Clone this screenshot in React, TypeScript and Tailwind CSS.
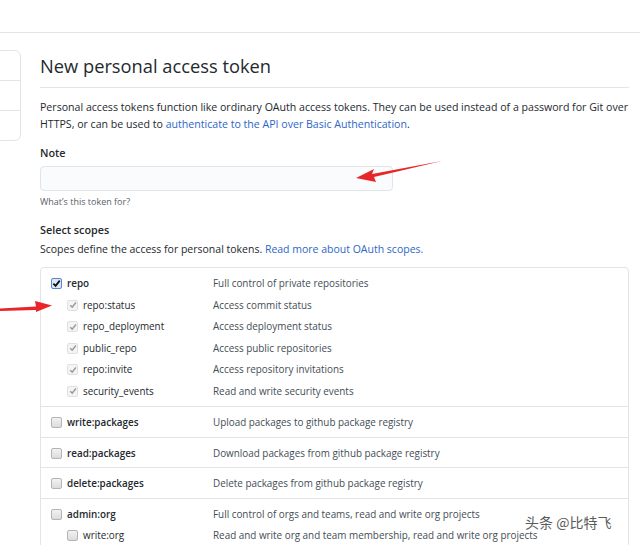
import React from 'react';

type Scope = { name: string; desc: string; sub?: boolean; checked?: boolean; bold?: boolean };

const groups: Scope[][] = [
  [
    { name: 'repo', desc: 'Full control of private repositories', checked: true, bold: true },
    { name: 'repo:status', desc: 'Access commit status', sub: true, checked: true },
    { name: 'repo_deployment', desc: 'Access deployment status', sub: true, checked: true },
    { name: 'public_repo', desc: 'Access public repositories', sub: true, checked: true },
    { name: 'repo:invite', desc: 'Access repository invitations', sub: true, checked: true },
    { name: 'security_events', desc: 'Read and write security events', sub: true, checked: true },
  ],
  [{ name: 'write:packages', desc: 'Upload packages to github package registry', bold: true }],
  [{ name: 'read:packages', desc: 'Download packages from github package registry', bold: true }],
  [{ name: 'delete:packages', desc: 'Delete packages from github package registry', bold: true }],
  [
    { name: 'admin:org', desc: 'Full control of orgs and teams, read and write org projects', bold: true },
    { name: 'write:org', desc: 'Read and write org and team membership, read and write org projects', sub: true },
  ],
];

const Check = ({ scope }: { scope: Scope }) => {
  if (scope.checked && !scope.sub) {
    return (
      <span className="flex h-[11px] w-[11px] shrink-0 items-center justify-center rounded-[2px] border border-[#5a86c9] bg-[#dbe7f7]">
        <svg width="9" height="9" viewBox="0 0 10 10">
          <path d="M1.5 5.2 L4 7.6 L8.6 1.8" fill="none" stroke="#111" strokeWidth="2" />
        </svg>
      </span>
    );
  }
  if (scope.checked) {
    return (
      <span className="flex h-[11px] w-[11px] shrink-0 items-center justify-center rounded-[2px] border border-[#e0e0e0] bg-[#f4f4f4]">
        <svg width="8" height="8" viewBox="0 0 10 10">
          <path d="M1.5 5.2 L4 7.6 L8.6 1.8" fill="none" stroke="#9a9a9a" strokeWidth="1.8" />
        </svg>
      </span>
    );
  }
  return (
    <span className="h-[11px] w-[11px] shrink-0 rounded-[2px] border border-[#b4b4b4] bg-gradient-to-b from-[#f2f2f2] to-[#dcdcdc]" />
  );
};

const Row = ({ scope }: { scope: Scope }) => (
  <div className="flex h-[21.5px] items-center whitespace-nowrap">
    <div className={`flex w-[172px] items-center ${scope.sub ? 'pl-[26px]' : 'pl-[10px]'}`}>
      <Check scope={scope} />
      <span className={`ml-[5px] text-[#24292e] ${scope.bold ? 'font-semibold' : ''}`}>{scope.name}</span>
    </div>
    <span className="text-[#444d56]">{scope.desc}</span>
  </div>
);

export default function App() {
  return (
    <div
      className="relative h-[545px] w-[640px] overflow-hidden bg-white text-[#24292e]"
      style={{ fontFamily: '"Open Sans", "Noto Sans", sans-serif' }}
    >
      <div className="h-[33px] border-b border-[#e1e4e8]" />
      <div className="flex">
        <div className="w-[40px] shrink-0 pt-[17px]">
          <div className="ml-[-10px] w-[31px] rounded-md border border-[#e1e4e8]">
            <div className="h-[30px] border-b border-[#e1e4e8]" />
            <div className="h-[30px] border-b border-[#e1e4e8]" />
            <div className="h-[29px]" />
          </div>
        </div>
        <div className="w-[589px]">
          <h1 className="mt-[18px] border-b border-[#e1e4e8] pb-[6px] text-[18.3px] font-normal leading-[30px] text-[#24292e]">
            New personal access token
          </h1>
          <p className="mt-[11px] text-[10.6px] leading-[17px]">
            Personal access tokens function like ordinary OAuth access tokens. They can be used instead of a password for Git over HTTPS, or can be used to{' '}
            <span className="text-[#2e66c8]">authenticate to the API over Basic Authentication</span>.
          </p>
          <div className="mt-[11px] text-[10.8px] font-semibold leading-[17px]">Note</div>
          <div className="mt-[5px] h-[25px] w-[353px] rounded-[4px] border border-[#e1e4e8] bg-[#fafbfc]" />
          <div className="mt-[4px] text-[9px] leading-[14px] text-[#586069]">What’s this token for?</div>
          <div className="mt-[12px] text-[10.8px] font-semibold leading-[17px]">Select scopes</div>
          <div className="mt-[3px] text-[10.5px] leading-[17px]">
            Scopes define the access for personal tokens. <span className="text-[#2e66c8]">Read more about OAuth scopes.</span>
          </div>
          <div className="mt-[9px] rounded-[4px] border border-[#e1e4e8] text-[9.9px]">
            {groups.map((g, i) => (
              <div key={i} className={i === 0 ? 'pt-[5px] pb-[4px]' : 'border-t border-[#e1e4e8] pt-[5px] pb-[3px]'}>
                {g.map((s) => (
                  <Row key={s.name} scope={s} />
                ))}
              </div>
            ))}
          </div>
        </div>
      </div>

      <svg className="pointer-events-none absolute left-0 top-0" width="640" height="545">
        <path d="M442 161 L372 174 L374 169 L356 178 L376 182 L374 177 Z" fill="#e8262a" />
        <path d="M0 308.5 L36 306.5 L35 301 L52 305.5 L36 312 L36 310 L0 311 Z" fill="#e8262a" />
      </svg>

      <div
        className="absolute left-[525px] top-[512px] text-[14px] leading-[20px] text-[#5a5a5a]"
        style={{ fontFamily: '"Noto Sans CJK SC", sans-serif', textShadow: '0 0 2px #fff, 0 0 2px #fff' }}
      >
        头条 @比特飞
      </div>
    </div>
  );
}
